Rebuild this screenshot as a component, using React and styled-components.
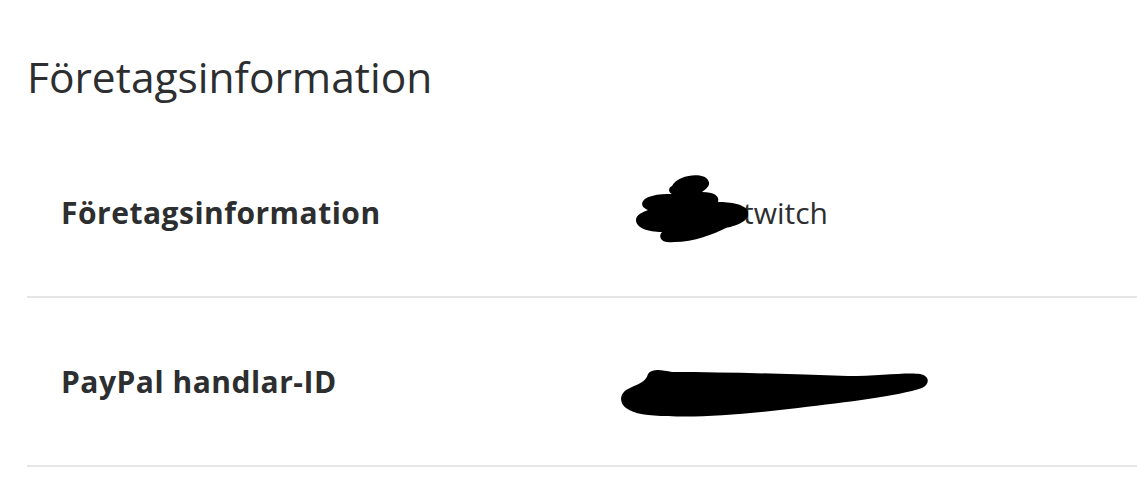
import React from 'react';
import styled, { createGlobalStyle } from 'styled-components';

const GlobalStyle = createGlobalStyle`
  body {
    margin: 0;
    background: #fff;
    font-family: "Open Sans", "Liberation Sans", sans-serif;
    color: #2c2e2f;
  }
`;

const Page = styled.div`
  padding: 50px 0 0 27px;
`;

const Title = styled.h1`
  margin: 0;
  font-size: 42.5px;
  font-weight: 400;
  line-height: 54px;
  color: #2c2e2f;
`;

const List = styled.div`
  margin-top: 25px;
`;

const Row = styled.div`
  display: grid;
  grid-template-columns: 575px 1fr;
  align-items: center;
  height: 167px;
  padding-left: 34px;
  border-bottom: 2px solid #e6e6e6;
`;

const Label = styled.div`
  font-size: 30px;
  font-weight: 700;
  letter-spacing: 0.5px;
  color: #2c2e2f;
`;

const Value = styled.div`
  position: relative;
  font-size: 30px;
  color: #2c2e2f;
  padding-left: ${(p) => p.$indent || 0}px;
`;

const Redact = styled.svg`
  position: absolute;
  left: ${(p) => p.$x}px;
  top: ${(p) => p.$y}px;
`;

const App = () => (
  <Page>
    <GlobalStyle />
    <Title>Företagsinformation</Title>
    <List>
      <Row>
        <Label>Företagsinformation</Label>
        <Value $indent={107}>
          twitch
          <Redact $x={-2} $y={-20} width="120" height="76" viewBox="0 0 120 76">
            <path
              d="M38 14 C44 2 70 0 74 8 C78 14 70 18 68 20 C80 20 86 24 84 30 C96 30 112 32 114 40 C116 50 100 54 92 56 C80 62 60 70 40 70 C26 72 24 64 28 60 C14 60 2 56 2 48 C2 42 10 40 14 38 C4 34 8 26 18 24 C24 22 32 22 38 22 C34 20 34 16 38 14 Z"
              fill="#000"
            />
          </Redact>
        </Value>
      </Row>
      <Row>
        <Label>PayPal handlar-ID</Label>
        <Value>
          &nbsp;
          <Redact $x={-18} $y={5} width="312" height="56" viewBox="0 0 312 56">
            <path
              d="M30 8 C34 2 44 4 54 6 C110 6 170 8 230 10 C260 10 290 6 302 8 C312 10 312 18 304 22 C280 30 230 36 180 42 C130 48 80 52 50 50 C30 50 16 48 8 42 C0 36 2 26 12 22 C20 18 28 16 30 8 Z"
              fill="#000"
            />
          </Redact>
        </Value>
      </Row>
    </List>
  </Page>
);

export default App;
